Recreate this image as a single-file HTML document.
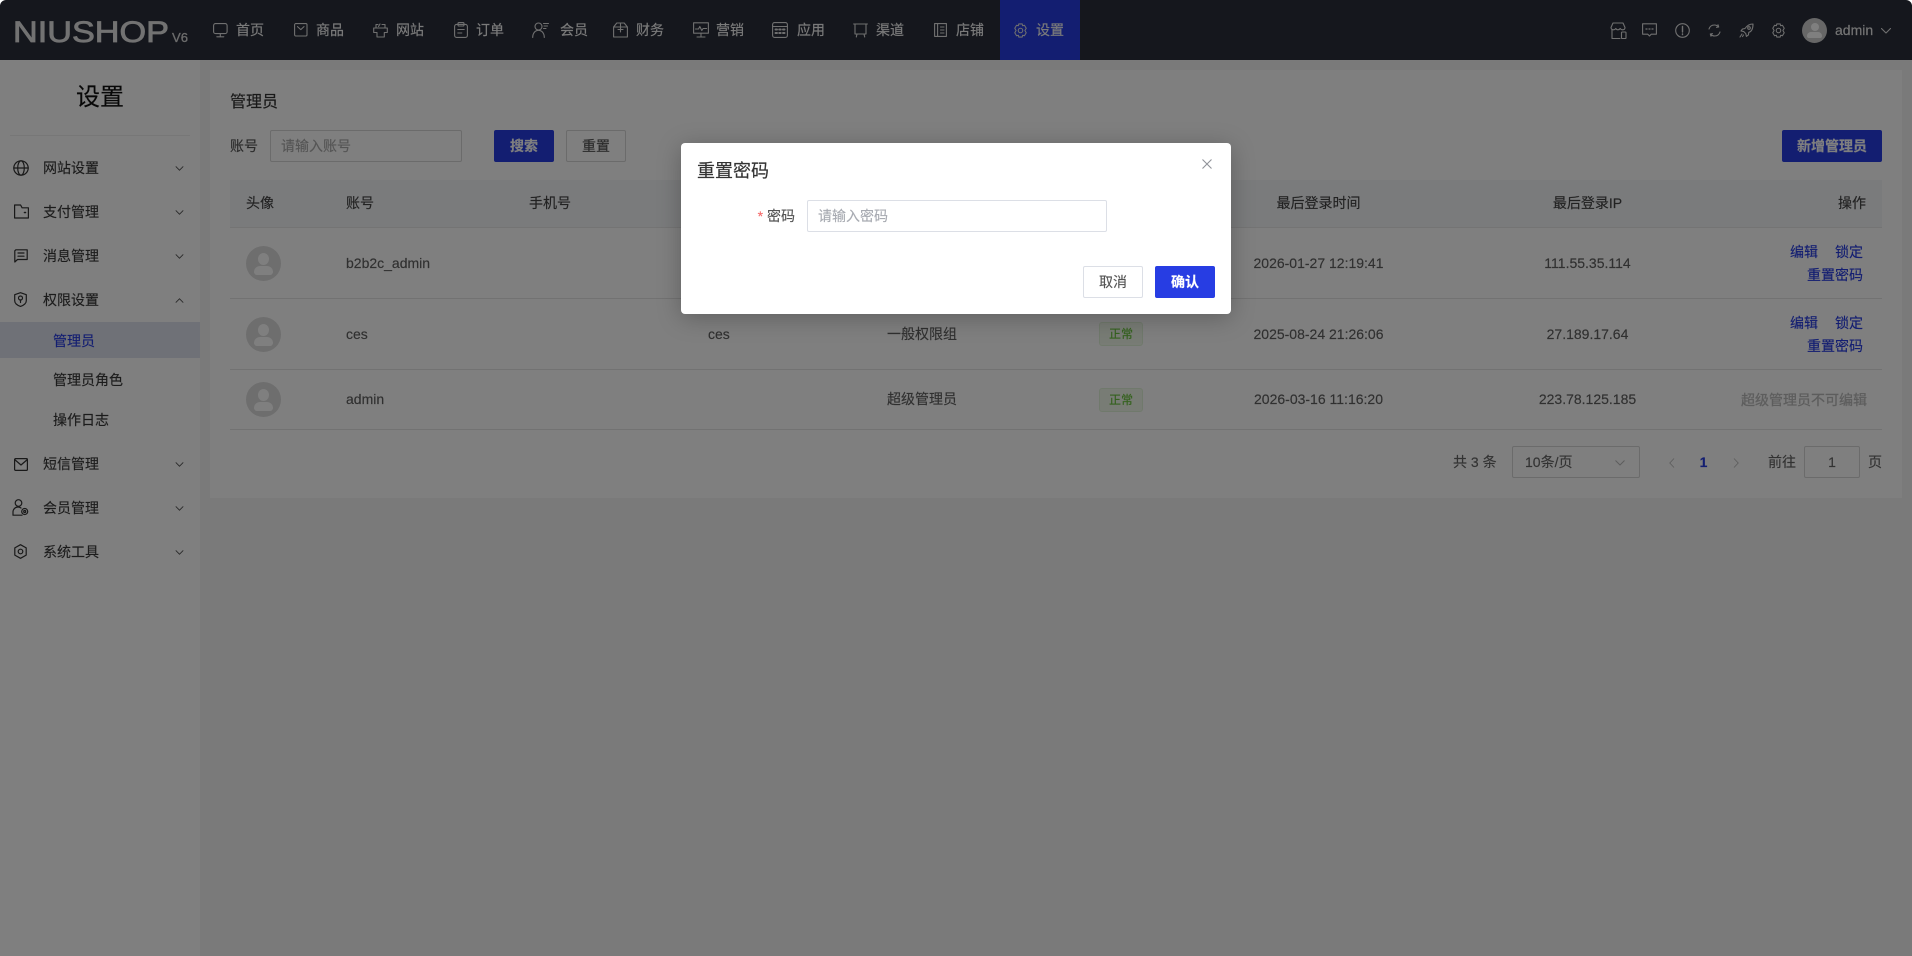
<!DOCTYPE html>
<html lang="zh">
<head>
<meta charset="utf-8">
<title>管理员</title>
<style>
*{box-sizing:border-box;margin:0;padding:0}
html,body{width:1912px;height:956px;overflow:hidden;background:#f5f5f5;font-family:"Liberation Sans","Noto Sans CJK SC",sans-serif;font-size:14px;color:#555;-webkit-text-stroke:.15px}
.a{position:absolute}
.t{position:absolute;line-height:20px;height:20px;white-space:nowrap}
.c{transform:translateX(-50%)}
.r{transform:translateX(-100%)}
#hd{position:absolute;left:0;top:0;width:1912px;height:60px;background:#2a2f3b}
#side{position:absolute;left:0;top:60px;width:200px;height:896px;background:#fff}
#card{position:absolute;left:210px;top:70px;width:1692px;height:428px;background:#fff}
.nav{color:#f4f4f4}
svg{position:absolute;overflow:visible}
.ni{fill:none;stroke:#e0e0e0;stroke-width:1.1;stroke-linejoin:round;stroke-linecap:round}
.si{fill:none;stroke:#333;stroke-width:1.2;stroke-linejoin:round;stroke-linecap:round}
.ch{fill:none;stroke:#555;stroke-width:1.1}
.m{color:#3a3a3a}
.box{position:absolute;border:1px solid #d6d6d6;background:#fff;border-radius:2px;height:32px}
.btn{position:absolute;height:32px;line-height:30px;text-align:center;border-radius:2px;border:1px solid #d6d6d6;background:#fff;color:#555}
.pri{background:#273de3;border-color:#273de3;color:#fff;font-weight:700}
.rowl{position:absolute;left:230px;width:1652px;height:1px;background:#e5e5e5}
.td{color:#606060}
.lnk{color:#273de3}
.ava{position:absolute;left:246px;width:35px;height:35px;border-radius:50%;background:#dcdcdc;overflow:hidden}
.ava:before{content:"";position:absolute;left:12px;top:7px;width:11px;height:12px;border-radius:50%;background:#fff}
.ava:after{content:"";position:absolute;left:8px;top:20px;width:19px;height:9px;border-radius:6px 6px 3px 3px;background:#fff}
.tag{position:absolute;left:1099px;width:44px;height:24px;line-height:22px;text-align:center;font-size:12px;background:#f0f9eb;border:1px solid #e1f3d8;border-radius:3px;color:#67c23a}
#ov{position:absolute;left:0;top:0;width:1912px;height:956px;background:rgba(0,0,0,.5)}
#dlg{position:absolute;left:681px;top:143px;width:550px;height:171px;background:#fff;border-radius:4px;box-shadow:0 4px 24px rgba(0,0,0,.25)}
</style>
</head>
<body>
<svg width="0" height="0" style="position:absolute">
<defs>
<symbol id="gear" viewBox="0 0 16 16"><path d="M6.2 1h3.6l.5 1.9 1.9-.5 1.9 3.2L12.7 8l1.4 2.4-1.9 3.2-1.9-.5-.5 1.9H6.2l-.5-1.9-1.9.5-1.9-3.2L3.3 8 1.9 5.6l1.9-3.2 1.9.5z"/><circle cx="8" cy="8" r="2.4"/></symbol>
<symbol id="cd" viewBox="0 0 10 6"><path d="M.5.5L5 5 9.5.5"/></symbol>
</defs>
</svg>

<div id="hd">
  <svg style="left:13px;top:15px" width="180" height="32">
    <text x="0" y="27" font-family="Liberation Sans" font-size="30" font-weight="400" fill="#e4e4e4" stroke="#e4e4e4" stroke-width=".8" textLength="156" lengthAdjust="spacingAndGlyphs">NIUSHOP</text>
    <text x="159" y="27" font-family="Liberation Sans" font-size="13" font-weight="400" fill="#d8d8d8" stroke="#d8d8d8" stroke-width=".3" textLength="16" lengthAdjust="spacingAndGlyphs">V6</text>
  </svg>

  <svg class="ni" style="left:213px;top:23px" width="15" height="15" viewBox="0 0 15 15"><rect x=".6" y=".6" width="13.5" height="10" rx="2"/><path d="M7.3 10.6v3M3.8 13.8h7"/></svg>
  <div class="t nav" style="left:236px;top:20px">首页</div>
  <svg class="ni" style="left:294px;top:23px" width="14" height="14" viewBox="0 0 14 14"><rect x=".6" y=".6" width="12.4" height="12.4" rx="1.2"/><path d="M3.5 3.6L6.8 6.6 10 3.6"/></svg>
  <div class="t nav" style="left:316px;top:20px">商品</div>
  <svg class="ni" style="left:373px;top:23px" width="15" height="15" viewBox="0 0 15 15"><path d="M3 4.5V1.5h2M7 1l-1.500 2.500M9 1.500h3v3M.7 5h13.600v4.500h-3v4.500H4V9.500H.7z"/></svg>
  <div class="t nav" style="left:396px;top:20px">网站</div>
  <svg class="ni" style="left:454px;top:22px" width="14" height="16" viewBox="0 0 14 16"><rect x=".6" y="2.400" width="12.800" height="13" rx="2"/><rect x="4" y=".6" width="6" height="3.400" rx="1"/><path d="M3.800 7.500h6.400M3.800 11h4"/></svg>
  <div class="t nav" style="left:476px;top:20px">订单</div>
  <svg class="ni" style="left:532px;top:22px" width="16" height="16" viewBox="0 0 16 16"><circle cx="6.500" cy="4.500" r="3.500"/><path d="M.7 15.500c0-4 2.300-7.200 5.800-7.200s5.800 3.200 5.800 7.200M11.500 1.500h5M12 4h3.500M11.500 6.500h2.500"/></svg>
  <div class="t nav" style="left:560px;top:20px">会员</div>
  <svg class="ni" style="left:613px;top:22px" width="15" height="16" viewBox="0 0 15 16"><path d="M.6 5L3.800 1h7.400l3.200 4v10H.6zM.6 5h13.800M7.500 1v9M5 7.500h5"/></svg>
  <div class="t nav" style="left:636px;top:20px">财务</div>
  <svg class="ni" style="left:693px;top:22px" width="16" height="16" viewBox="0 0 16 16"><rect x=".6" y=".8" width="14.800" height="10.400"/><path d="M2.500 7h3l1.300-2.500 2 4 1.300-2h3.500M8 11.200V15M4 15h8"/></svg>
  <div class="t nav" style="left:716px;top:20px">营销</div>
  <svg class="ni" style="left:772px;top:22px" width="16" height="16" viewBox="0 0 16 16"><rect x=".6" y=".6" width="14.800" height="14.800" rx="2"/><path d="M.6 4.500h14.800"/><path d="M3.500 7.500h1.500M7.200 7.500h1.500M11 7.500h1.500M3.500 11h1.500M7.200 11h1.500M11 11h1.500" stroke-width="2"/></svg>
  <div class="t nav" style="left:797px;top:20px">应用</div>
  <svg class="ni" style="left:853px;top:23px" width="15" height="15" viewBox="0 0 15 15"><path d="M.6 1h13.800M2 1v10h11V1M4 11l-.7 3M11 11l.7 3"/></svg>
  <div class="t nav" style="left:876px;top:20px">渠道</div>
  <svg class="ni" style="left:934px;top:23px" width="13" height="14" viewBox="0 0 13 14"><rect x=".6" y=".6" width="11.800" height="12.800"/><path d="M3.600.6v12.800M6.500 4h3.500M6.500 7h3.500M6.500 10h3.500"/></svg>
  <div class="t nav" style="left:956px;top:20px">店铺</div>
  <div class="a" style="left:1000px;top:0;width:80px;height:60px;background:#273de3"></div>
  <svg class="ni" style="left:1013px;top:23px" width="15" height="15"><use href="#gear"/></svg>
  <div class="t nav" style="left:1036px;top:20px">设置</div>

  <svg class="ni" style="left:1610px;top:22px" width="17" height="17" viewBox="0 0 17 17"><path d="M3 1h10l2 4.500c0 1.500-1 2.300-2.300 2.300S10.500 7 10.200 6.500C9.500 7.500 8.800 7.800 8 7.800S6.300 7.500 5.800 6.500C5.300 7.300 4.500 7.800 3.300 7.800S1 7 1 5.500zM2 8v8.500h8"/><rect x="11.500" y="10" width="4.500" height="6.500" rx=".8"/></svg>
  <svg class="ni" style="left:1642px;top:23px" width="15" height="15" viewBox="0 0 15 15"><path d="M.6.8h13.800v10.400H9.200L7.500 13l-1.700-1.800H.6z"/><path d="M4 6h1M7 6h1M10 6h1" stroke-width="1.300"/></svg>
  <svg class="ni" style="left:1675px;top:23px" width="15" height="15" viewBox="0 0 15 15"><circle cx="7.500" cy="7.500" r="6.800"/><path d="M7.500 3.500v5.500M7.500 11v.6" stroke-width="1.400"/></svg>
  <svg class="ni" style="left:1708px;top:24px" width="13" height="13" viewBox="0 0 13 13"><path d="M1 5C1.800 2.500 3.800 1 6.300 1 8 1 9.500 1.700 10.500 3M12 8c-.8 2.500-2.800 4-5.300 4-1.700 0-3.200-.7-4.200-2M10 .8L10.700 3l-2.200.3M3 12.200L2.300 10l2.200-.3"/></svg>
  <svg class="ni" style="left:1739px;top:23px" width="15" height="15" viewBox="0 0 15 15"><path d="M14 1c-3.500 0-6 1.500-8 4.500L3.500 6l-1.500 2 2.800.6 2 2 .6 2.800 2-1.500.4-2.500C12.800 8.500 14 5 14 1z"/><circle cx="10" cy="5" r="1.300"/><path d="M3 11l-2 3M4.500 12l-1 1.500"/></svg>
  <svg class="ni" style="left:1771px;top:23px" width="15" height="15"><use href="#gear"/></svg>
  <div class="a" style="left:1802px;top:18px;width:25px;height:25px;border-radius:50%;background:#cfcfcf;overflow:hidden">
    <div class="a" style="left:8.500px;top:5px;width:8px;height:8px;border-radius:50%;background:#fff"></div>
    <div class="a" style="left:5px;top:14px;width:15px;height:6px;border-radius:4px 4px 2px 2px;background:#fff"></div>
  </div>
  <div class="t nav" style="left:1835px;top:20px;color:#e8e8e8">admin</div>
  <svg class="ni" style="left:1881px;top:28px" width="10" height="6"><use href="#cd"/></svg>
</div>

<div id="side">
  <div class="t c" style="left:100px;top:26px;font-size:24px;line-height:24px;height:24px;color:#111">设置</div>
  <div class="a" style="left:10px;top:75px;width:180px;height:1px;background:#eee"></div>

  <svg class="si" style="left:13px;top:100px" width="16" height="16" viewBox="0 0 16 16"><circle cx="8" cy="8" r="7.200"/><ellipse cx="8" cy="8" rx="3.300" ry="7.200"/><path d="M.8 8h14.400"/></svg>
  <div class="t m" style="left:43px;top:98px">网站设置</div>
  <svg class="ch" style="left:175px;top:106px" width="9" height="5" viewBox="0 0 10 6"><path d="M.5.500L5 5 9.500.5"/></svg>

  <svg class="si" style="left:14px;top:144px" width="15" height="15" viewBox="0 0 15 15"><path d="M.6 1h6l1.500 2.800h6.300V14H.6z"/><path d="M10.500 8.500h1" stroke-width="1.600"/></svg>
  <div class="t m" style="left:43px;top:142px">支付管理</div>
  <svg class="ch" style="left:175px;top:150px" width="9" height="5" viewBox="0 0 10 6"><path d="M.5.500L5 5 9.500.5"/></svg>

  <svg class="si" style="left:14px;top:189px" width="14" height="14" viewBox="0 0 14 14"><path d="M1.800.8h11.400v9.700H3.500L.8 13V1.800z"/><path d="M4 4h6M4 7.200h6"/></svg>
  <div class="t m" style="left:43px;top:186px">消息管理</div>
  <svg class="ch" style="left:175px;top:194px" width="9" height="5" viewBox="0 0 10 6"><path d="M.5.500L5 5 9.500.5"/></svg>

  <svg class="si" style="left:14px;top:232px" width="13" height="15" viewBox="0 0 13 15"><path d="M6.500.7l5.800 2v6c0 2.500-2.500 4.500-5.800 5.700C3.200 13.200.7 11.200.7 8.700v-6z"/><circle cx="6.500" cy="6" r="2"/><path d="M6.500 8v2.500"/></svg>
  <div class="t m" style="left:43px;top:230px">权限设置</div>
  <svg class="ch" style="left:175px;top:238px" width="9" height="5" viewBox="0 0 10 6"><path d="M.5 5.500L5 1l4.500 4.500"/></svg>

  <div class="a" style="left:0;top:262px;width:200px;height:36px;background:#dfe3ee"></div>
  <div class="t" style="left:53px;top:271px;color:#273de3">管理员</div>
  <div class="t m" style="left:53px;top:310px">管理员角色</div>
  <div class="t m" style="left:53px;top:350px">操作日志</div>

  <svg class="si" style="left:14px;top:398px" width="14" height="13" viewBox="0 0 14 13"><rect x=".6" y=".6" width="12.800" height="11.800" rx="1"/><path d="M.6 1.500L7 7l6.400-5.500"/></svg>
  <div class="t m" style="left:43px;top:394px">短信管理</div>
  <svg class="ch" style="left:175px;top:402px" width="9" height="5" viewBox="0 0 10 6"><path d="M.5.500L5 5 9.500.5"/></svg>

  <svg class="si" style="left:12px;top:439px" width="17" height="17" viewBox="0 0 17 17"><circle cx="6.500" cy="4" r="3.300"/><path d="M1 16.200V13c0-2.800 2.300-5 5-5 1.500 0 2.500.6 3 1M1 16.200h9"/><circle cx="12.700" cy="12.500" r="3"/><circle cx="12.700" cy="12.500" r="1"/></svg>
  <div class="t m" style="left:43px;top:438px">会员管理</div>
  <svg class="ch" style="left:175px;top:446px" width="9" height="5" viewBox="0 0 10 6"><path d="M.5.500L5 5 9.500.5"/></svg>

  <svg class="si" style="left:14px;top:484px" width="13" height="15" viewBox="0 0 13 15"><path d="M6.500.7l5.700 3.200v7.200l-5.700 3.200L.8 11.100V3.900z"/><circle cx="6.500" cy="7.500" r="2.300"/></svg>
  <div class="t m" style="left:43px;top:482px">系统工具</div>
  <svg class="ch" style="left:175px;top:490px" width="9" height="5" viewBox="0 0 10 6"><path d="M.5.500L5 5 9.500.5"/></svg>
</div>

<div id="card"></div>
<div class="t" style="left:230px;top:93px;font-size:16px;color:#333">管理员</div>
<div class="t" style="left:230px;top:136px;color:#555">账号</div>
<div class="box" style="left:270px;top:130px;width:192px"></div>
<div class="t" style="left:281px;top:136px;color:#aaa">请输入账号</div>
<div class="btn pri" style="left:494px;top:130px;width:60px">搜索</div>
<div class="btn" style="left:566px;top:130px;width:60px">重置</div>
<div class="btn pri" style="left:1782px;top:130px;width:100px">新增管理员</div>

<div class="a" style="left:230px;top:180px;width:1652px;height:48px;background:#f4f6f9;border-bottom:1px solid #e8e8e8"></div>
<div class="t" style="left:246px;top:193px;color:#444">头像</div>
<div class="t" style="left:346px;top:193px;color:#444">账号</div>
<div class="t" style="left:529px;top:193px;color:#444">手机号</div>
<div class="t c" style="left:1318.500px;top:193px;color:#444">最后登录时间</div>
<div class="t c" style="left:1587.500px;top:193px;color:#444">最后登录IP</div>
<div class="t r" style="left:1866px;top:193px;color:#444">操作</div>

<div class="rowl" style="top:298px"></div>
<div class="rowl" style="top:369px"></div>
<div class="rowl" style="top:429px"></div>

<div class="ava" style="top:246px"></div>
<div class="t td" style="left:346px;top:253px">b2b2c_admin</div>
<div class="t c td" style="left:1318.500px;top:253px">2026-01-27 12:19:41</div>
<div class="t c td" style="left:1587.500px;top:253px">111.55.35.114</div>
<div class="t lnk" style="left:1790px;top:242px">编辑</div>
<div class="t lnk" style="left:1835px;top:242px">锁定</div>
<div class="t lnk" style="left:1807px;top:265px">重置密码</div>

<div class="ava" style="top:317px"></div>
<div class="t td" style="left:346px;top:324px">ces</div>
<div class="t td" style="left:708px;top:324px">ces</div>
<div class="t td" style="left:887px;top:324px">一般权限组</div>
<div class="tag" style="top:322px">正常</div>
<div class="t c td" style="left:1318.500px;top:324px">2025-08-24 21:26:06</div>
<div class="t c td" style="left:1587.500px;top:324px">27.189.17.64</div>
<div class="t lnk" style="left:1790px;top:313px">编辑</div>
<div class="t lnk" style="left:1835px;top:313px">锁定</div>
<div class="t lnk" style="left:1807px;top:336px">重置密码</div>

<div class="ava" style="top:382px"></div>
<div class="t td" style="left:346px;top:389px">admin</div>
<div class="t td" style="left:887px;top:389px">超级管理员</div>
<div class="tag" style="top:388px">正常</div>
<div class="t c td" style="left:1318.500px;top:389px">2026-03-16 11:16:20</div>
<div class="t c td" style="left:1587.500px;top:389px">223.78.125.185</div>
<div class="t" style="left:1741px;top:390px;color:#bbb;-webkit-text-stroke:.3px">超级管理员不可编辑</div>

<div class="t" style="left:1453px;top:452px;color:#666">共 3 条</div>
<div class="box" style="left:1512px;top:446px;width:128px"></div>
<div class="t" style="left:1525px;top:452px;color:#666">10条/页</div>
<svg class="ch" style="left:1615px;top:460px;stroke:#bbb" width="10" height="6"><use href="#cd"/></svg>
<svg class="ch" style="left:1669px;top:458px;stroke:#bbb;stroke-width:.9" width="6" height="10" viewBox="0 0 6 10"><path d="M5 .5L.8 5 5 9.500"/></svg>
<div class="t c" style="left:1703.500px;top:452px;color:#273de3;font-weight:700">1</div>
<svg class="ch" style="left:1733px;top:458px;stroke:#bbb;stroke-width:.9" width="6" height="10" viewBox="0 0 6 10"><path d="M1 .5L5.200 5 1 9.500"/></svg>
<div class="t" style="left:1768px;top:452px;color:#666">前往</div>
<div class="box" style="left:1804px;top:446px;width:56px"></div>
<div class="t c" style="left:1832px;top:452px;color:#666">1</div>
<div class="t" style="left:1868px;top:452px;color:#666">页</div>

<div id="ov"></div>

<div id="dlg">
  <div class="t" style="left:16px;top:18px;font-size:18px;color:#333">重置密码</div>
  <svg style="left:521px;top:16px;fill:none;stroke:#909399;stroke-width:1.100" width="10" height="10"><path d="M.5.500l9 9M9.500.5l-9 9"/></svg>
  <div class="t r" style="left:114px;top:63px;color:#555"><span style="color:#f56c6c">*</span> 密码</div>
  <div class="a" style="left:126px;top:57px;width:300px;height:32px;border:1px solid #dcdfe6;border-radius:2px"></div>
  <div class="t" style="left:137px;top:63px;color:#a8abb2">请输入密码</div>
  <div class="btn" style="left:402px;top:123px;width:60px;border-color:#dcdfe6">取消</div>
  <div class="btn pri" style="left:474px;top:123px;width:60px">确认</div>
</div>

<svg style="left:0;top:0" width="6" height="6"><path d="M0 0h6A6 6 0 0 0 0 6z" fill="#fff"/></svg>
<svg style="left:1906px;top:0" width="6" height="6"><path d="M6 0H0A6 6 0 0 1 6 6z" fill="#fff"/></svg>
</body>
</html>
